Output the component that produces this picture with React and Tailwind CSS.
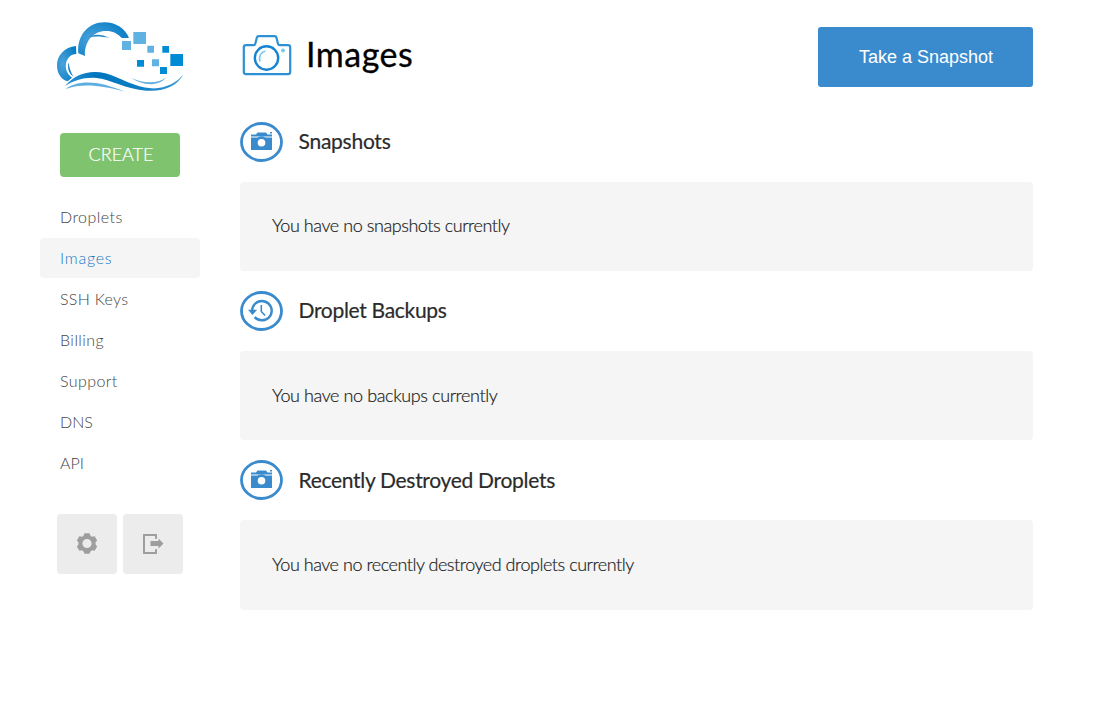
const navItems = [
  { label: 'Droplets', spacing: 'tracking-[0.45px]' },
  { label: 'Images', spacing: 'tracking-[0.75px]', active: true },
  { label: 'SSH Keys', spacing: 'tracking-[0.3px]' },
  { label: 'Billing', spacing: 'tracking-[0.45px]' },
  { label: 'Support', spacing: 'tracking-[0.4px]' },
  { label: 'DNS', spacing: 'tracking-[0px]' },
  { label: 'API', spacing: 'tracking-[0px]' },
];

function Logo() {
  return (
    <svg width="140" height="85" viewBox="0 0 420 255" className="block shrink-0">
      <defs>
        <radialGradient id="arc" cx="0.3" cy="0.5" r="0.7">
          <stop offset="0" stopColor="#4ba3dc" />
          <stop offset="1" stopColor="#0a7dc4" />
        </radialGradient>
        <linearGradient id="wave" x1="0" x2="1">
          <stop offset="0" stopColor="#2f93d3" />
          <stop offset="0.25" stopColor="#0075be" />
          <stop offset="0.6" stopColor="#0a7cc3" />
          <stop offset="1" stopColor="#3b9cd9" />
        </linearGradient>
      </defs>
      <path d="M105 123 L85 115 C80 60 116 22 163 22 C197 22 226 40 237 69 L215 69 C202 54 184 46 163 48 C130 50 102 80 105 123Z" fill="url(#arc)" />
      <path d="M117 67 C131 55 155 57 180 69 C155 64 135 63 117 67Z" fill="#2087ca" />
      <path d="M78 93 C43 96 21 122 21 151 C21 175 33 194 53 199 L66 188 C51 178 45 162 48 145 C52 128 62 118 79 117Z" fill="url(#arc)" />
      <path d="M56 142 C51 160 57 176 70 185 C61 169 58 158 56 142Z" fill="#1682c7" />
      <path d="M45 213 C75 177 120 163 166 175 C212 188 249 216 304 220 C347 222 382 202 400 178 C383 213 341 231 289 227 C228 223 181 193 139 189 C104 186 72 196 45 213Z" fill="url(#wave)" />
      <path d="M47 222 C89 192 150 199 224 230 C155 211 98 204 47 222Z" fill="#5dafe1" />
      <path d="M243 188 C282 207 321 206 348 188 C324 215 278 213 243 188Z" fill="#61b0e1" />
      <path d="M250 51h38v36h-38zM216 78h27v27h-27zM292 92h20v21h-20zM306 133h21v21h-21z" fill="#61b1e3" />
      <path d="M337 93h20v20h-20zM361 117h38v36h-38zM261 135h21v20h-21zM330 156h21v21h-21z" fill="#008bd5" />
    </svg>
  );
}

function CameraOutline() {
  return (
    <svg width="50" height="42" viewBox="0 0 50 42" fill="none" className="block shrink-0">
      <path d="M4 11.2h7.5q1.4 0 1.8-1.5l1.5-6q.4-1.6 2-1.6h15.7q1.6 0 2 1.6l1.5 6q.4 1.5 1.8 1.5H46q2.2 0 2.2 2.2v24.5q0 2.2-2.2 2.2H4q-2.2 0-2.2-2.2V13.4q0-2.2 2.2-2.2Z" stroke="#2d91d5" strokeWidth="2.2" />
      <circle cx="24.5" cy="24" r="11.7" stroke="#1684d2" strokeWidth="2.4" />
      <path d="M18 27.5C16.400 22 19 18 23.500 17" stroke="#7bc9f1" strokeWidth="1.7" />
      <circle cx="41" cy="16.5" r="2" fill="#7bc9f1" />
    </svg>
  );
}

function SectionIcon({ kind }) {
  return (
    <svg width="43" height="40" viewBox="0 0 43 40" className="block shrink-0">
      <ellipse cx="21.5" cy="20" rx="20" ry="18.5" fill="none" stroke="#3a8bce" strokeWidth="2.8" />
      {kind === 'camera' ? (
        <g>
          <path fill="#3a8bce" d="M11 12.500h5l1.500-2H26l1.500 2H32v2H11zM11 15.500h21V28H11zM30 10h2v1.500h-2z" />
          <circle cx="21.5" cy="20.7" r="6.4" fill="#3a8bce" />
          <circle cx="21.5" cy="20.7" r="3.8" fill="#fff" />
        </g>
      ) : (
        <g fill="none" stroke="#3a8bce">
          <path d="M12 20.500C12 14.500 16.300 10 21.800 10S31.700 14.500 31.700 19.800s-4.400 9.500-9.900 9.500c-2.900 0-5.400-1.200-7.200-3.100" strokeWidth="2.4" />
          <path d="M8 18.700h9.200l-4.700 5.300z" fill="#3a8bce" stroke="none" />
          <path d="M21.300 14v6.500l3.800 4" strokeWidth="1.6" />
        </g>
      )}
    </svg>
  );
}

function GearIcon() {
  return (
    <svg width="22" height="22" viewBox="-11 -10.5 22 22">
      <circle r="6.6" fill="none" stroke="#9e9e9e" strokeWidth="4" />
      <g fill="#9e9e9e">
        <path id="tooth" d="M-3.600-7.500L-2.500-10.300H2.500L3.600-7.500z" />
        <use href="#tooth" transform="rotate(60)" />
        <use href="#tooth" transform="rotate(120)" />
        <use href="#tooth" transform="rotate(180)" />
        <use href="#tooth" transform="rotate(240)" />
        <use href="#tooth" transform="rotate(300)" />
      </g>
    </svg>
  );
}

function ExitIcon() {
  return (
    <svg width="22" height="22" viewBox="0 0 22 22">
      <path d="M14 5.8V2H2v18h12v-3.800" fill="none" stroke="#9e9e9e" strokeWidth="2" />
      <path d="M8.5 8h8V5.500l5 5-5 5V13h-8z" fill="#9e9e9e" />
    </svg>
  );
}

function Section({ icon, title, titleClass, message, messageClass, boxClass }) {
  return (
    <section>
      <div className="flex h-10 items-center">
        <SectionIcon kind={icon} />
        <h2 className={`ml-[15.5px] whitespace-nowrap text-[21px] text-[#2b2b2b] [-webkit-text-stroke:0.2px_#2b2b2b] ${titleClass}`}>{title}</h2>
      </div>
      <div className={`mt-5 flex items-center rounded bg-[#f5f5f5] pl-8 ${boxClass}`}>
        <p className={`whitespace-nowrap text-[18px] font-light text-[#222] [-webkit-text-stroke:0.2px_#222] ${messageClass}`}>{message}</p>
      </div>
    </section>
  );
}

export default function App() {
  return (
    <div className="flex h-[727px] w-[1110px] overflow-hidden bg-white font-['Lato','Open_Sans',sans-serif]">
      <aside className="ml-10 w-40 shrink-0 pt-[15px]">
        <div className="ml-2.5"><Logo /></div>
        <button className="ml-5 mt-[33px] block h-11 w-[120px] rounded bg-[#7fc36e] pb-0.5 pl-0.5 text-[18px] font-light text-white [-webkit-text-stroke:0.2px_white]">CREATE</button>
        <nav className="mt-[20px] flex flex-col gap-px">
          {navItems.map((item) => (
            <a key={item.label} className={`flex h-10 items-center rounded pl-5 text-[16px] font-light ${item.spacing} ${item.active ? 'bg-[#f5f5f5] text-[#1677c4]' : 'text-[#444]'}`}>
              <span>{item.label}</span>
            </a>
          ))}
        </nav>
        <div className="ml-[17px] mt-[31px] flex gap-1.5">
          <button aria-label="Settings" className="flex size-[60px] items-center justify-center rounded bg-[#ececec]"><GearIcon /></button>
          <button aria-label="Log out" className="flex size-[60px] items-center justify-center rounded bg-[#ececec]"><ExitIcon /></button>
        </div>
      </aside>
      <main className="ml-10 w-[793px]">
        <header className="flex h-[122px] items-start justify-between pt-[27px]">
          <div className="ml-0.5 flex h-[56px] items-center">
            <CameraOutline />
            <h1 className="ml-[14px] pb-0.5 text-[34px] leading-[54px] tracking-[0.5px] text-black [-webkit-text-stroke:0.3px_black]">Images</h1>
          </div>
          <button className="h-[60px] w-[215px] rounded-[3px] bg-[#3a8bce] pl-px font-['Liberation_Sans',sans-serif] text-[18px] text-white">Take a Snapshot</button>
        </header>
        <div className="flex flex-col gap-5">
          <Section icon="camera" title="Snapshots" titleClass="pb-0.5 tracking-[-0.25px]" message="You have no snapshots currently" messageClass="pb-0.5 tracking-[-0.44px]" boxClass="h-[89px]" />
          <Section icon="history" title="Droplet Backups" titleClass="pb-0.5 tracking-[-0.3px]" message="You have no backups currently" messageClass="tracking-[-0.4px]" boxClass="h-[89px]" />
          <Section icon="camera" title="Recently Destroyed Droplets" titleClass="tracking-[-0.3px]" message="You have no recently destroyed droplets currently" messageClass="pb-0.5 tracking-[-0.47px]" boxClass="h-[90px]" />
        </div>
      </main>
    </div>
  );
}
